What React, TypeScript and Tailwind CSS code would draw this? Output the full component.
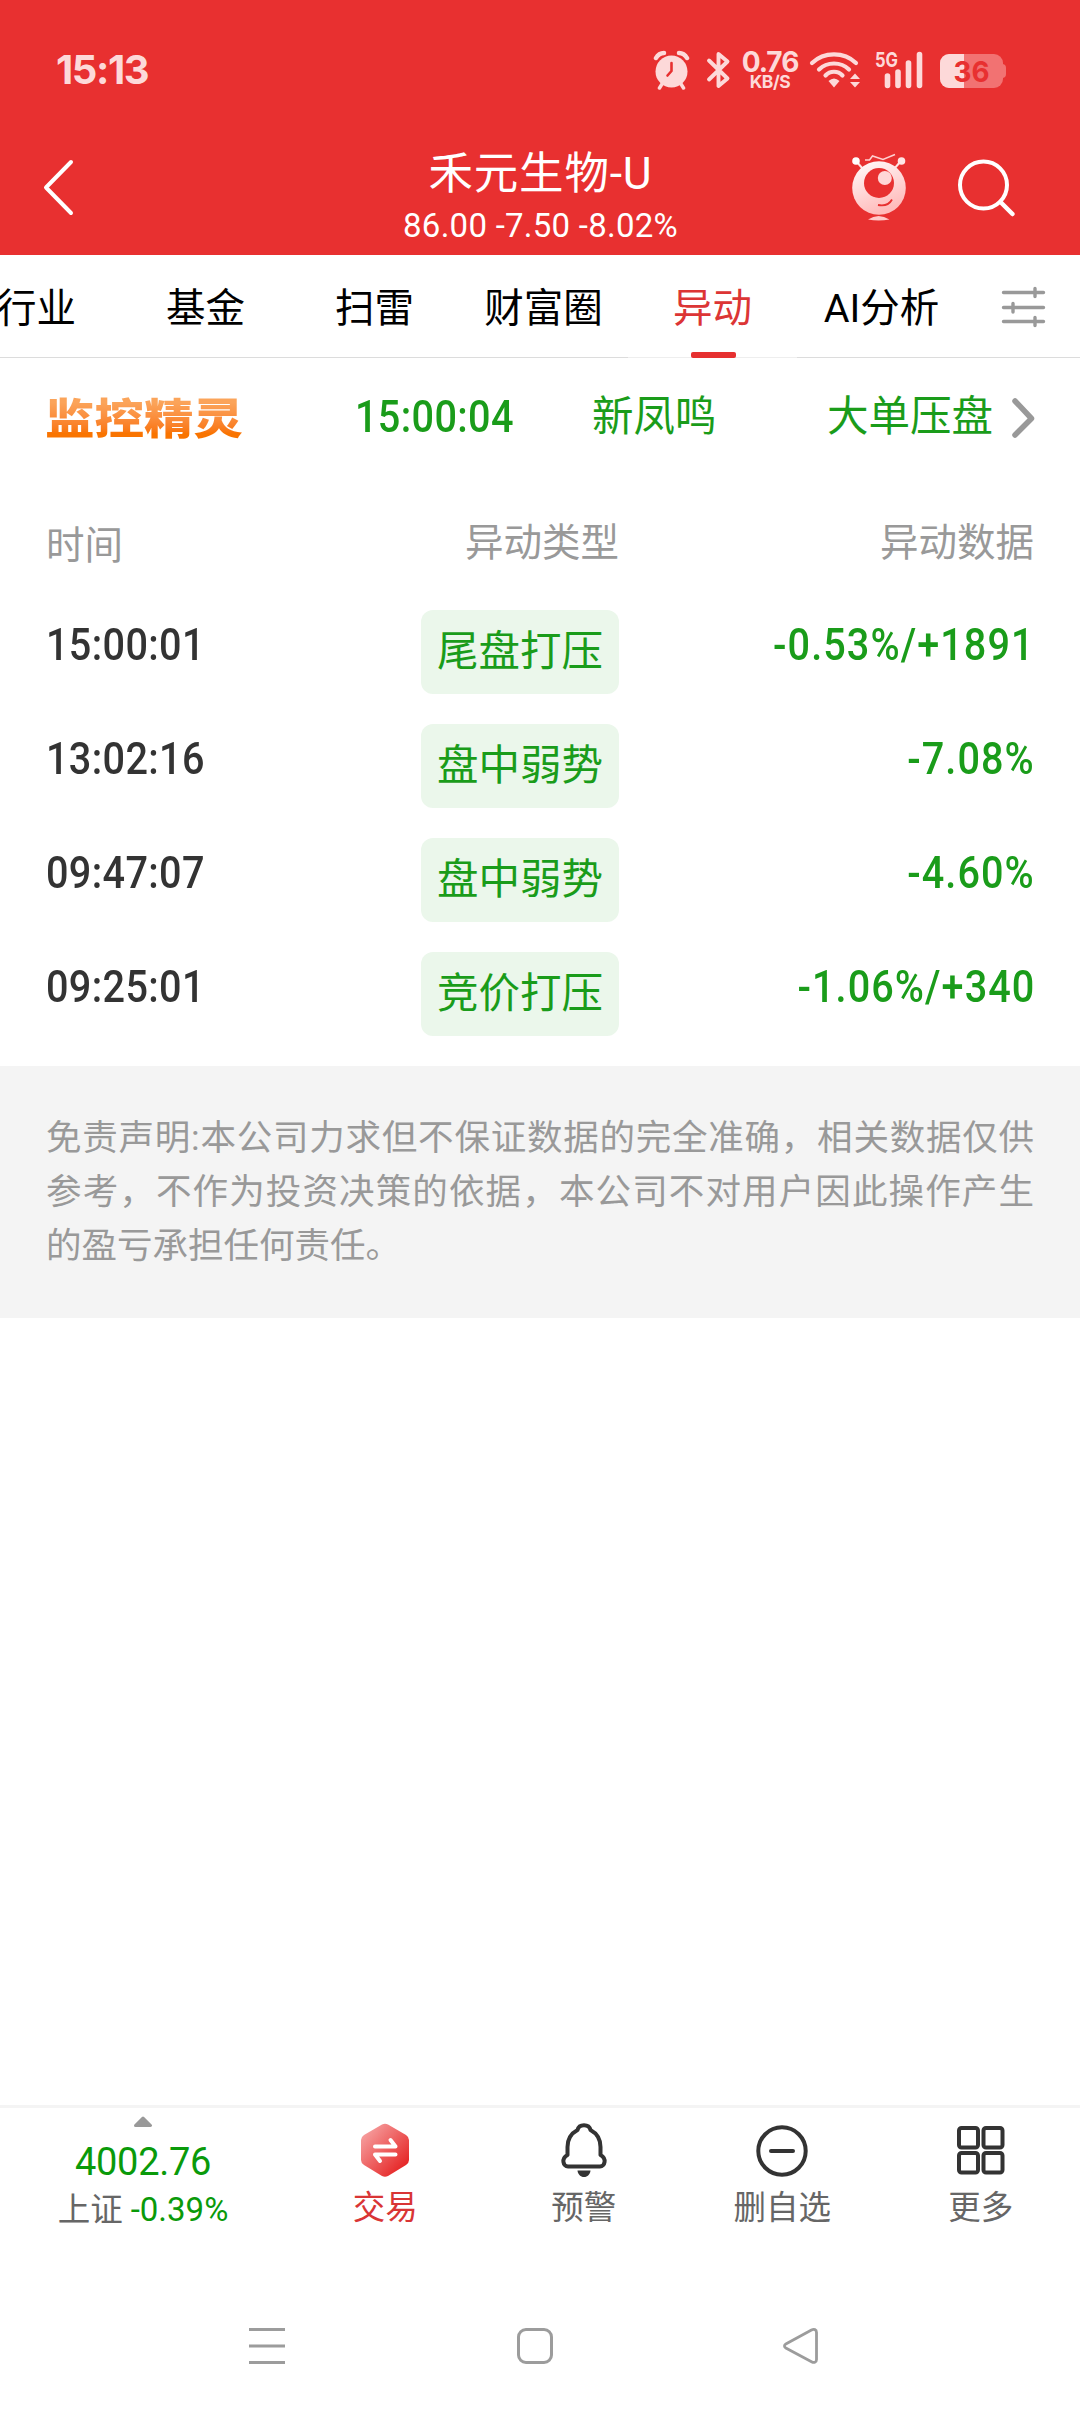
import { useState } from 'react';

interface Movement {
    time: string;
    type: string;
    data: string;
}

const TABS = ['行业', '基金', '扫雷', '财富圈', '异动', 'AI分析'];

const MOVEMENTS: Movement[] = [
    { time: '15:00:01', type: '尾盘打压', data: '-0.53%/+1891' },
    { time: '13:02:16', type: '盘中弱势', data: '-7.08%' },
    { time: '09:47:07', type: '盘中弱势', data: '-4.60%' },
    { time: '09:25:01', type: '竞价打压', data: '-1.06%/+340' },
];

function StatusBar() {
    return (
        <div className="flex h-[120px] items-start pt-[48px] pl-[56px] text-[#fdd9d9]">
            <div className="w-[597px] font-['Inter'] text-[40px] leading-[43px] font-bold tracking-[-1.4px]">15:13</div>
            <svg className="mt-[2px] h-[40px] w-[38px]" viewBox="0 0 38 40">
                <circle cx="18.5" cy="21.5" r="16" fill="currentColor" />
                <path d="M3 8 C5 4.500 7.500 3 11 3 M26 3 C29.500 3 32 4.500 34 8" fill="none" stroke="currentColor" strokeWidth="4.500" strokeLinecap="round" />
                <path d="M9 34 L6.500 38 M28 34 L30.500 38" stroke="currentColor" strokeWidth="3.500" strokeLinecap="round" />
                <path d="M18.500 13 V21 L14.500 25.500" fill="none" stroke="#e83030" strokeWidth="2.600" strokeLinecap="round" strokeLinejoin="round" />
            </svg>
            <svg className="mt-[3px] ml-[15px] h-[38px] w-[25px]" viewBox="0 0 25 38">
                <path d="M3 9.500 L21.500 27.500 L12.500 35 V3 L21.500 10.500 L3 28.500" fill="none" stroke="currentColor" strokeWidth="3.900" strokeLinecap="round" strokeLinejoin="round" />
            </svg>
            <div className="ml-[9px] flex w-[60px] flex-col items-center pt-[3px] font-['Inter'] font-bold">
                <span className="text-[28px] leading-[22px] tracking-[-1px]">0.76</span>
                <span className="text-[17.500px] leading-[18px] tracking-[-0.5px]">KB/S</span>
            </div>
            <svg className="mt-[3px] ml-[9px] h-[38px] w-[53px]" viewBox="0 0 53 38">
                <g fill="none" stroke="currentColor" strokeWidth="4.200" strokeLinecap="round">
                    <path d="M3 12 C15 0.500 35 0.500 47 12" />
                    <path d="M10 18.500 C18 10.500 32 10.500 40 18.500" />
                    <path d="M16.500 24.500 C21 19.500 29 19.500 33.500 24.500" />
                </g>
                <path d="M19.500 30 Q25 25 30.500 30 L25 36.500 Z" fill="currentColor" />
                <path d="M41 28 L46 22.500 L51 28 Z M41 31 H51 L46 36.500 Z" fill="currentColor" />
            </svg>
            <svg className="mt-[3px] ml-[13px] h-[38px] w-[52px] overflow-visible" viewBox="0 0 52 38">
                <text x="0" y="15.500" fill="currentColor" fontFamily="Inter" fontWeight="700" fontSize="20" textLength="23" lengthAdjust="spacingAndGlyphs">5G</text>
                <path d="M12.500 25 V34.500 M23 21 V34.500 M33.500 12 V34.500 M44.500 3.500 V34.500" stroke="currentColor" strokeWidth="5.600" strokeLinecap="round" />
            </svg>
            <svg className="mt-[6px] ml-[13px] h-[34px] w-[68px]" viewBox="0 0 68 34">
                <defs>
                    <clipPath id="battery">
                        <rect width="63" height="34" rx="9" />
                    </clipPath>
                </defs>
                <path d="M62 10 Q66 10 66 14 V20 Q66 24 62 24 Z" fill="#f27272" />
                <g clipPath="url(#battery)">
                    <rect width="63" height="34" fill="#f27272" />
                    <rect width="24" height="34" fill="#fdd9d9" />
                </g>
                <text x="13.500" y="28" fill="#e83030" fontFamily="Inter" fontWeight="700" fontSize="29" textLength="36" lengthAdjust="spacingAndGlyphs">36</text>
            </svg>
        </div>
    );
}

function MascotIcon() {
    return (
        <svg className="h-[70px] w-[56px]" viewBox="0 0 56 70">
            <defs>
                <linearGradient id="mascot" x1="0" y1="0" x2="0.4" y2="1">
                    <stop offset="0" stopColor="#ffffff" />
                    <stop offset="0.3" stopColor="#ffe9e9" />
                    <stop offset="1" stopColor="#ffbcbc" />
                </linearGradient>
            </defs>
            <path d="M5 9 L12 17 M50 9 L43 17" stroke="#ffe5e5" strokeWidth="2" />
            <circle cx="5" cy="9" r="3.800" fill="#fff" />
            <circle cx="50.500" cy="9" r="3.800" fill="#ffe5e5" />
            <path d="M14 8 H18.500 L21.500 4 L32 7.500 L44 2.500" fill="none" stroke="#ffd0d0" strokeWidth="1.500" />
            <circle cx="28" cy="36" r="26.800" fill="url(#mascot)" />
            <circle cx="28" cy="31" r="15" fill="#e83030" />
            <circle cx="33.800" cy="26" r="7" fill="#ffd6d6" />
            <path d="M27 53 Q37 55 41 47.500" fill="none" stroke="#e83030" strokeWidth="1.800" />
            <path d="M17 67.500 Q27.500 60.500 38.500 67.500 Q27.500 69.500 17 67.500 Z" fill="#ffc9c9" />
        </svg>
    );
}

function Header() {
    return (
        <div className="flex h-[135px] items-start justify-between text-white">
            <svg className="mt-[38px] ml-[42px] h-[60px] w-[35px]" viewBox="0 0 35 60">
                <path d="M29 4 L4 29.500 L29 55" fill="none" stroke="currentColor" strokeWidth="4" strokeLinecap="round" strokeLinejoin="round" />
            </svg>
            <div className="ml-[154px] flex flex-1 flex-col items-center pt-[28px]">
                <h1 className="text-[44.500px] leading-[52px] tracking-[0.8px]">禾元生物-U</h1>
                <p className="text-[33px] leading-[52px] tracking-[0.25px]">86.00 -7.50 -8.02%</p>
            </div>
            <div className="flex w-[230px] items-start">
                <div className="mt-[32px] ml-[1px]">
                    <MascotIcon />
                </div>
                <svg className="mt-[37px] ml-[48px] h-[62px] w-[62px]" viewBox="0 0 62 62">
                    <circle cx="28.500" cy="28" r="23.500" fill="none" stroke="currentColor" strokeWidth="4" />
                    <path d="M45.500 45 L57.500 57" stroke="currentColor" strokeWidth="4.500" strokeLinecap="round" />
                </svg>
            </div>
        </div>
    );
}

function TabBar({ active, onChange }: { active: string; onChange: (tab: string) => void }) {
    return (
        <div className="flex h-[103px] overflow-hidden bg-white">
            <div className="ml-[-48px] flex shrink-0">
                {TABS.map((tab) => (
                    <button
                        key={tab}
                        onClick={() => onChange(tab)}
                        className={`flex w-[169px] flex-col items-center border-b pt-[28px] text-[39.500px] leading-[52px] ${
                            tab === active ? 'border-[#eeeeee] text-[#dc3535]' : 'border-[#dcdcdc] text-black'
                        }`}
                    >
                        {tab}
                        {tab === active && <span className="mt-[17px] -mb-px ml-[2px] h-[6px] w-[45px] shrink-0 rounded-[2px] bg-[#e63030]" />}
                    </button>
                ))}
            </div>
            <div className="flex-1 border-b border-[#dcdcdc]">
                <svg className="mt-[31px] ml-[34px] h-[44px] w-[46px]" viewBox="0 0 46 44">
                    <path d="M3.500 6.500 H43.500 M3.500 21.500 H43.500 M3.500 35.500 H43.500 M35 2.500 V10.500 M13 17.500 V26 M35 31.500 V39.500" stroke="#999" strokeWidth="3.400" strokeLinecap="round" />
                </svg>
            </div>
        </div>
    );
}

function MonitorRow() {
    return (
        <div className="flex h-[120px] pl-[45px] text-[41.500px] leading-[118px] text-[#1a9c1a]">
            <div className="w-[310px] origin-[0_60px] scale-y-[0.86] bg-linear-to-b from-[#fba45a] from-35% to-[#f97400] to-65% bg-clip-text text-[49.500px] leading-[124px] font-black text-transparent">
                监控精灵
            </div>
            <div className="w-[237px]">
                <span className="inline-block origin-left scale-x-[0.9] text-[44px] font-medium tracking-[0.4px]">15:00:04</span>
            </div>
            <div className="w-[235px]">新凤鸣</div>
            <div>大单压盘</div>
            <svg className="mt-[37px] ml-[16px] h-[46px] w-[30px]" viewBox="0 0 30 46">
                <path d="M6 6 L22.500 23.500 L6 40" fill="none" stroke="#999" strokeWidth="5.500" strokeLinecap="round" strokeLinejoin="round" />
            </svg>
        </div>
    );
}

function MovementTable() {
    return (
        <div className="h-[588px] px-[46px] pt-[38px]">
            <div className="grid h-[94px] grid-cols-[375px_198px_415px] text-[38.500px] leading-[54px] text-[#999]">
                <div className="pt-[3px]">时间</div>
                <div className="text-right">异动类型</div>
                <div className="text-right">异动数据</div>
            </div>
            <div className="flex flex-col gap-[30px]">
                {MOVEMENTS.map((item) => (
                    <div key={item.time} className="grid h-[84px] grid-cols-[375px_198px_415px]">
                        <div>
                            <span className="inline-block origin-left scale-x-[0.9] text-[44px] leading-[70px] font-medium tracking-[0.4px] text-[#333]">{item.time}</span>
                        </div>
                        <div className="rounded-[12px] bg-[#ebf7eb] text-center text-[41.500px] leading-[84px] text-[#1a9c1a]">{item.type}</div>
                        <div className="text-right">
                            <span className="-mr-px inline-block origin-right scale-x-[0.9] text-[44px] leading-[70px] font-medium tracking-[1.2px] text-[#1a9c1a]">{item.data}</span>
                        </div>
                    </div>
                ))}
            </div>
        </div>
    );
}

function BottomBar() {
    return (
        <div className="flex h-[167px] border-t-[3px] border-[#f4f4f4] text-[32.500px] leading-[40px] text-[#666]">
            <div className="flex w-[286px] flex-col items-center pt-[8px]">
                <svg className="h-[12px] w-[20px]" viewBox="0 0 20 12">
                    <path d="M10 2 L17.500 9.500 H2.500 Z" fill="#999" stroke="#999" strokeWidth="3" strokeLinejoin="round" />
                </svg>
                <div className="mt-[12px] text-[38px] leading-[44px] tracking-[-0.3px] text-[#0a9a0a]">4002.76</div>
                <div className="mt-[5px] flex gap-[8px] leading-[42px]">
                    <span>上证</span>
                    <span className="text-[33px] text-[#0a9a0a]">-0.39%</span>
                </div>
            </div>
            <div className="flex flex-1 flex-col items-center pt-[14px] text-[#d93535]">
                <svg className="h-[56px] w-[50px]" viewBox="0 0 50 56">
                    <defs>
                        <linearGradient id="trade" x1="0.1" y1="0.1" x2="0.85" y2="0.85">
                            <stop offset="0" stopColor="#f6a0a0" />
                            <stop offset="1" stopColor="#e62828" />
                        </linearGradient>
                    </defs>
                    <path d="M22 2.500 Q25 1 28 2.500 L46 13 Q49 15 49 18 V38 Q49 41 46 43 L28 54 Q25 55.500 22 54 L4 43 Q1 41 1 38 V18 Q1 15 4 13 Z" fill="url(#trade)" />
                    <path d="M15 24.500 H35.500 L30.500 18 M35.500 32.500 H15 L20 39" fill="none" stroke="#fff" strokeWidth="4" strokeLinecap="round" strokeLinejoin="round" />
                </svg>
                <span className="mt-[10px]">交易</span>
            </div>
            <div className="flex flex-1 flex-col items-center pt-[14px]">
                <svg className="h-[56px] w-[50px]" viewBox="0 0 50 56">
                    <path d="M18.500 8 C20 1.500 30 1.500 31.500 8 C38 11.500 41.500 17.500 41.500 25 V33 C48 36.500 46 44.500 41 44.500 H9 C4 44.500 2 36.500 8.500 33 V25 C8.500 17.500 12 11.500 18.500 8 Z" fill="none" stroke="#333" strokeWidth="4" strokeLinejoin="round" />
                    <path d="M18.500 48.500 H31.500 C31 52.500 28.500 55 25 55 C21.500 55 19 52.500 18.500 48.500 Z" fill="#333" />
                </svg>
                <span className="mt-[10px]">预警</span>
            </div>
            <div className="flex flex-1 flex-col items-center pt-[14px]">
                <svg className="h-[56px] w-[54px]" viewBox="0 0 54 56">
                    <circle cx="27" cy="29" r="23.700" fill="none" stroke="#333" strokeWidth="4" />
                    <path d="M16 29 H38" stroke="#333" strokeWidth="4" strokeLinecap="round" />
                </svg>
                <span className="mt-[10px]">删自选</span>
            </div>
            <div className="flex flex-1 flex-col items-center pt-[14px]">
                <svg className="h-[56px] w-[50px]" viewBox="0 0 50 56">
                    <g fill="none" stroke="#333" strokeWidth="4">
                        <rect x="3" y="6" width="19" height="19.500" rx="2.500" />
                        <rect x="27.500" y="6" width="19" height="19.500" rx="2.500" />
                        <rect x="3" y="31" width="19" height="19.500" rx="2.500" />
                        <rect x="27.500" y="31" width="19" height="19.500" rx="2.500" />
                    </g>
                </svg>
                <span className="mt-[10px]">更多</span>
            </div>
        </div>
    );
}

function SystemNav() {
    return (
        <div className="flex h-[140px] pt-[54px] pl-[247px]">
            <svg className="h-[40px] w-[40px]" viewBox="0 0 40 40">
                <path d="M2 3.500 H38 M2 20 H38 M2 36.500 H38" stroke="#9c9c9c" strokeWidth="3" />
            </svg>
            <svg className="ml-[228px] h-[40px] w-[40px]" viewBox="0 0 40 40">
                <rect x="3.500" y="3.500" width="33" height="33" rx="7.500" fill="none" stroke="#9c9c9c" strokeWidth="3" />
            </svg>
            <svg className="ml-[226px] h-[40px] w-[40px]" viewBox="0 0 40 40">
                <path d="M4.800 18 L30.500 4 C33 2.700 35.500 3.500 35.500 6.500 V33.500 C35.500 36.500 33 37 30.500 35.700 L4.800 22 C3 21 3 19 4.800 18 Z" fill="none" stroke="#9c9c9c" strokeWidth="2.800" strokeLinejoin="round" />
            </svg>
        </div>
    );
}

export default function App() {
    const [activeTab, setActiveTab] = useState('异动');

    return (
        <div lang="zh-CN" className="flex h-[2412px] w-[1080px] flex-col overflow-hidden bg-white font-['Roboto','Noto_Sans_CJK_SC',sans-serif]">
            <div className="bg-[#e83030]">
                <StatusBar />
                <Header />
            </div>
            <TabBar active={activeTab} onChange={setActiveTab} />
            <MonitorRow />
            <MovementTable />
            <p className="h-[252px] bg-[#f4f4f4] px-[46px] pt-[45px] text-justify text-[35.500px] leading-[54px] text-[#999]">
                免责声明:本公司力求但不保证数据的完全准确，相关数据仅供参考，不作为投资决策的依据，本公司不对用户因此操作产生的盈亏承担任何责任。
            </p>
            <div className="flex-1" />
            <BottomBar />
            <SystemNav />
        </div>
    );
}
